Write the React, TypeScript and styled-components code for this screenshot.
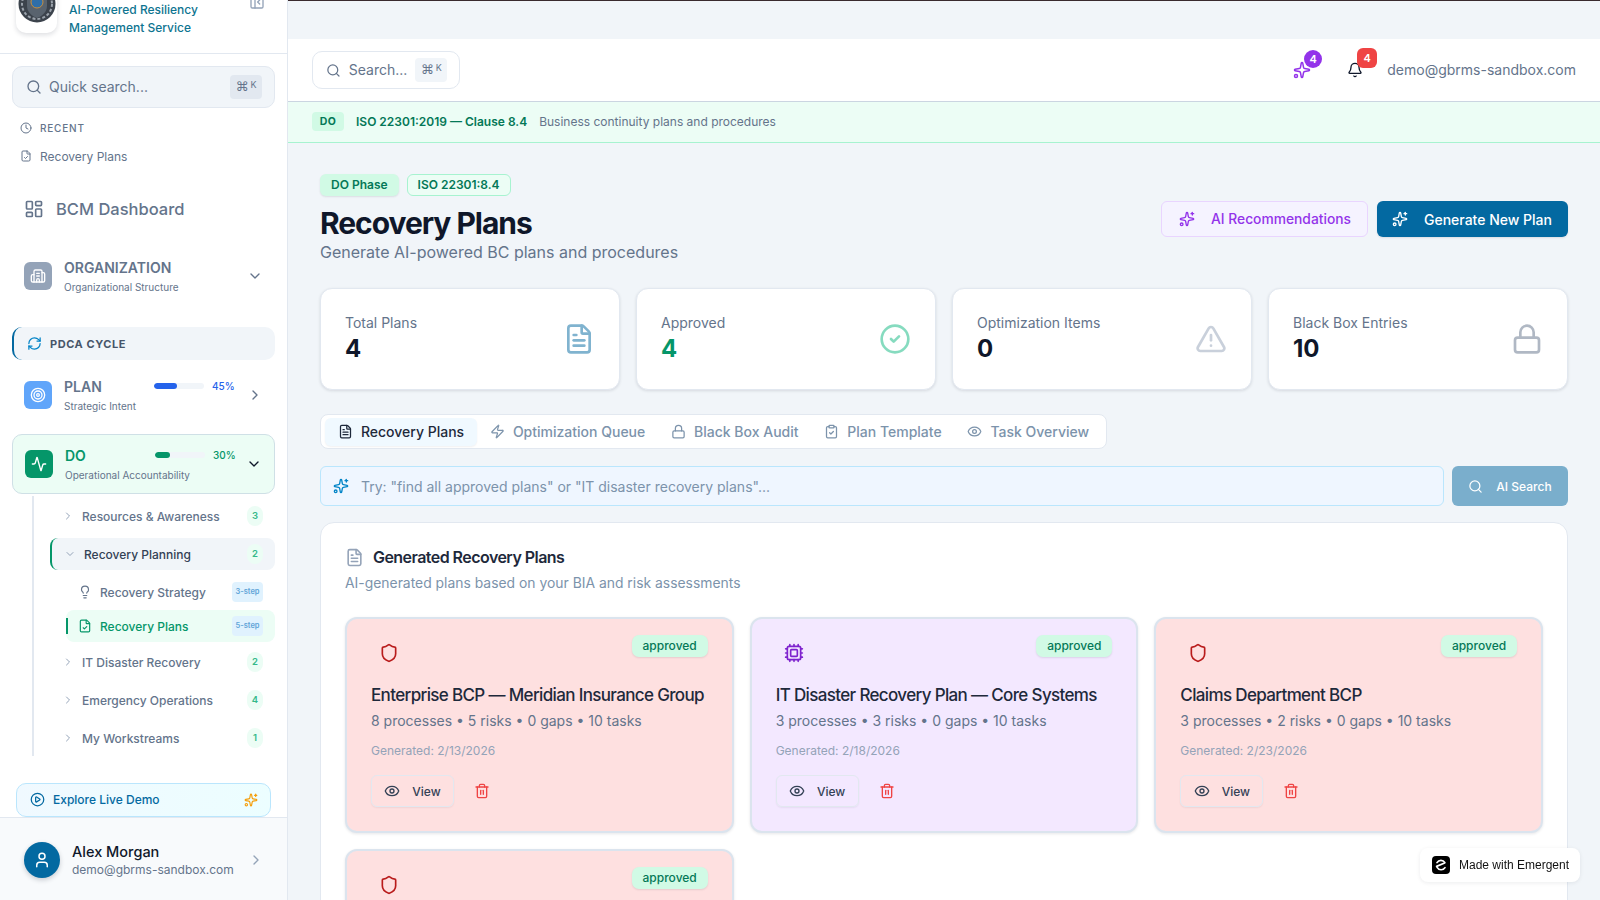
import React from "react";
import styled, { createGlobalStyle } from "styled-components";
import {
  Activity,
  Bell,
  Building2,
  ChevronDown,
  ChevronRight,
  CircleCheck,
  CirclePlay,
  Clock,
  ClipboardCheck,
  Cpu,
  Eye,
  FileCheck,
  FileText,
  LayoutDashboard,
  Lightbulb,
  Lock,
  PanelLeftClose,
  RefreshCw,
  Search,
  Shield,
  Sparkles,
  Target,
  Trash2,
  TriangleAlert,
  User,
  Zap,
} from "lucide-react";

const GlobalStyle = createGlobalStyle`
  * { box-sizing: border-box; }
  html, body { margin: 0; height: 100%; }
  body {
    font-family: Inter, "Liberation Sans", sans-serif;
    color: #0f172a;
    background: #f1f5f9;
  }
`;

const Page = styled.div`
  display: flex;
  height: 900px;
  overflow: hidden;
`;

/* sidebar */
const Side = styled.aside`
  width: 288px;
  flex: none;
  background: #fff;
  border-right: 1px solid #e2e8f0;
  display: flex;
  flex-direction: column;
`;

const Brand = styled.div`
  height: 54px;
  flex: none;
  overflow: hidden;
  border-bottom: 1px solid #e2e8f0;
  display: flex;
  align-items: flex-end;
  padding: 0 22px 16px 16px;
  gap: 12px;
`;

const LogoBox = styled.div`
  width: 41px;
  height: 60px;
  margin-bottom: 4px;
  flex: none;
  background: #fff;
  border-radius: 10px;
  box-shadow: 0 2px 5px rgba(15, 23, 42, 0.14);
  display: flex;
  align-items: flex-end;
  justify-content: center;
  padding-bottom: 10px;
`;

const BrandText = styled.div`
  flex: 1;
  font-size: 12px;
  line-height: 18px;
  font-weight: 500;
  color: #0e7490;
`;

const Collapse = styled.div`
  color: #94a3b8;
  height: 16px;
  margin-bottom: 27px;
  svg { display: block; }
`;

const Nav = styled.nav`
  flex: 1;
  min-height: 0;
  padding: 12px 12px 0;
  display: flex;
  flex-direction: column;
`;

const QuickSearch = styled.div`
  height: 42px;
  flex: none;
  background: #f1f5f9;
  border: 1px solid #e2e8f0;
  border-radius: 10px;
  display: flex;
  align-items: center;
  padding: 0 12px 0 13px;
  gap: 7px;
  color: #64748b;
  font-size: 14px;
  span.label { flex: 1; margin-bottom: 2px; }
`;

const Kbd = styled.kbd<{ $small?: boolean }>`
  display: flex;
  align-items: flex-start;
  justify-content: center;
  gap: 2px;
  width: 32px;
  height: 24px;
  background: ${(p) => (p.$small ? "#f1f5f9" : "#e2e8f0")};
  border-radius: 4px;
  color: #64748b;
  font-family: "DejaVu Sans", sans-serif;
  font-size: 13px;
  line-height: 24px;
  small {
    font-family: Inter, sans-serif;
    font-size: 9px;
    line-height: 20px;
  }
`;

const RecentHead = styled.div`
  margin: 14px 0 0 8px;
  height: 12px;
  display: flex;
  align-items: center;
  gap: 8px;
  font-size: 10px;
  font-weight: 500;
  letter-spacing: 0.08em;
  color: #64748b;
`;

const RecentItem = styled.div`
  margin: 14px 0 0 8px;
  height: 16px;
  display: flex;
  align-items: center;
  gap: 8px;
  font-size: 12px;
  color: #64748b;
`;

const DashLink = styled.div`
  margin: 27px 0 0 12px;
  height: 36px;
  display: flex;
  align-items: center;
  gap: 12px;
  font-size: 16.5px;
  font-weight: 500;
  color: #64748b;
`;

const PhaseRow = styled.div<{ $top: number; $active?: boolean }>`
  margin-top: ${(p) => p.$top}px;
  height: ${(p) => (p.$active ? 60 : 34)}px;
  flex: none;
  display: flex;
  align-items: center;
  padding: 0 12px;
  border-radius: 10px;
  ${(p) => p.$active && "background: #ecfdf5; border: 1px solid #cfe0e6;"}
`;

const PhaseIcon = styled.div<{ $bg: string }>`
  width: 28px;
  height: 28px;
  flex: none;
  background: ${(p) => p.$bg};
  border-radius: 6px;
  color: #fff;
  display: flex;
  align-items: center;
  justify-content: center;
`;

const PhaseText = styled.div`
  margin-left: 12px;
  flex: 1;
  min-width: 0;
`;

const PhaseTop = styled.div`
  display: flex;
  align-items: center;
  height: 18px;
`;

const PhaseName = styled.div<{ $color: string }>`
  width: 90px;
  font-size: 14px;
  line-height: 18px;
  font-weight: 600;
  color: ${(p) => p.$color};
`;

const Bar = styled.div`
  width: 50px;
  height: 6px;
  background: #f1f5f9;
  border-radius: 3px;
  overflow: hidden;
  margin-bottom: 2px;
`;

const BarFill = styled.div<{ $color: string }>`
  height: 100%;
  background: ${(p) => p.$color};
  border-radius: 3px;
`;

const Percent = styled.div<{ $color: string }>`
  margin-left: 8px;
  font-size: 10px;
  font-weight: 500;
  color: ${(p) => p.$color};
  margin-bottom: 2px;
`;

const PhaseSub = styled.div`
  margin-top: 3px;
  font-size: 10px;
  line-height: 14px;
  color: #64748b;
`;

const PhaseArrow = styled.div<{ $color: string }>`
  width: 16px;
  height: 16px;
  flex: none;
  color: ${(p) => p.$color};
`;

const PdcaHead = styled.div`
  margin-top: 34px;
  height: 33px;
  flex: none;
  background: #f1f5f9;
  border-left: 2px solid #0369a1;
  border-radius: 10px;
  display: flex;
  align-items: center;
  gap: 8px;
  padding-left: 13px;
  font-size: 11px;
  font-weight: 700;
  letter-spacing: 0.05em;
  color: #475569;
  svg { color: #0284c7; }
`;

const Tree = styled.div`
  margin: 2px 0 0 20px;
  height: 260px;
  flex: none;
  border-left: 2px solid #e2e8f0;
  padding: 4px 0 0 16px;
  display: flex;
  flex-direction: column;
  gap: 6px;
`;

const TreeRow = styled.div<{ $open?: boolean }>`
  height: 32px;
  flex: none;
  display: flex;
  align-items: center;
  padding: 0 12px;
  font-size: 12px;
  font-weight: 500;
  color: ${(p) => (p.$open ? "#334155" : "#64748b")};
  border-radius: 8px;
  ${(p) => p.$open && "background: #f1f5f9; border-left: 2px solid #059669;"}
  svg { color: #94a3b8; flex: none; }
  span.label { flex: 1; margin-left: 8px; }
`;

const Count = styled.div`
  min-width: 16px;
  height: 20px;
  padding: 0 5px;
  border-radius: 10px;
  background: #ecfdf5;
  font-size: 9.5px;
  font-weight: 600;
  line-height: 20px;
  text-align: center;
  color: #34b98a;
`;

const SubList = styled.div`
  display: flex;
  flex-direction: column;
  gap: 2px;
  margin: 0 0 -2px 16px;
`;

const SubRow = styled.div<{ $active?: boolean }>`
  position: relative;
  height: 32px;
  display: flex;
  align-items: center;
  padding: 0 12px;
  font-size: 12px;
  font-weight: 500;
  border-radius: 8px;
  color: ${(p) => (p.$active ? "#059669" : "#64748b")};
  background: ${(p) => (p.$active ? "#ecfdf5" : "transparent")};
  gap: 8px;
  span.label { flex: 1; }
  ${(p) =>
    p.$active &&
    `&::before {
      content: "";
      position: absolute;
      left: 0;
      top: 8px;
      width: 2px;
      height: 16px;
      background: #059669;
    }`}
`;

const StepTag = styled.div`
  width: 31px;
  height: 20px;
  border-radius: 4px;
  background: #e0f2fe;
  font-size: 7.5px;
  font-weight: 600;
  line-height: 20px;
  text-align: center;
  color: #60a5d8;
`;

const DemoLink = styled.div`
  margin: 0 16px;
  height: 34px;
  flex: none;
  background: linear-gradient(90deg, #f0f9ff, #ecfeff);
  border: 1px solid #bae6fd;
  border-radius: 10px;
  display: flex;
  align-items: center;
  padding: 0 12px 1px 13px;
  gap: 8px;
  font-size: 12px;
  font-weight: 500;
  color: #0369a1;
  span.label { flex: 1; }
`;

const UserBar = styled.div`
  height: 83px;
  flex: none;
  background: #f8fafc;
  border-top: 1px solid #e2e8f0;
  display: flex;
  align-items: center;
  padding: 2px 23px 0 24px;
  gap: 12px;
`;

const Avatar = styled.div`
  width: 36px;
  height: 36px;
  flex: none;
  border-radius: 50%;
  background: #0369a1;
  color: #fff;
  box-shadow: 0 2px 5px rgba(15, 23, 42, 0.2);
  display: flex;
  align-items: center;
  justify-content: center;
`;

const UserText = styled.div`
  flex: 1;
  min-width: 0;
  margin-top: 2px;
  white-space: nowrap;
  b { display: block; font-size: 14.5px; line-height: 18px; font-weight: 500; color: #0f172a; }
  span { display: block; font-size: 12px; line-height: 18px; color: #64748b; }
`;

/* main column */
const Main = styled.main`
  flex: 1;
  min-width: 0;
  display: flex;
  flex-direction: column;
  overflow: hidden;
`;

const TopStrip = styled.div`
  height: 39px;
  flex: none;
  background: #f1f5f9;
  border-top: 1px solid #3a2a2e;
`;

const Header = styled.header`
  height: 63px;
  flex: none;
  background: #fff;
  border-bottom: 1px solid #cbd5e1;
  display: flex;
  align-items: center;
  justify-content: space-between;
  padding: 0 24px;
`;

const HeadSearch = styled.div`
  width: 148px;
  height: 38px;
  border: 1px solid #e2e8f0;
  border-radius: 10px;
  display: flex;
  align-items: center;
  gap: 8px;
  padding: 0 12px 0 13px;
  font-size: 14px;
  color: #64748b;
  span.label { flex: 1; margin-bottom: 2px; }
`;

const HeadRight = styled.div`
  display: flex;
  align-items: center;
`;

const IconSlot = styled.div<{ $color: string; $gap?: number }>`
  position: relative;
  width: 20px;
  height: 20px;
  margin-left: ${(p) => p.$gap ?? 0}px;
  color: ${(p) => p.$color};
  display: flex;
  align-items: center;
  justify-content: center;
`;

const HeadBadge = styled.div<{ $red?: boolean }>`
  position: absolute;
  font-size: 11px;
  font-weight: 600;
  color: #fff;
  text-align: center;
  background: ${(p) => (p.$red ? "#ef4444" : "#9333ea")};
  width: ${(p) => (p.$red ? 20 : 18)}px;
  height: ${(p) => (p.$red ? 20 : 18)}px;
  line-height: ${(p) => (p.$red ? 20 : 18)}px;
  border-radius: ${(p) => (p.$red ? "6px" : "50%")};
  top: ${(p) => (p.$red ? -12 : -10)}px;
  left: 12px;
`;

const HeadMail = styled.div`
  margin: 0 0 2px 22px;
  font-size: 14px;
  color: #64748b;
`;

const Banner = styled.div`
  height: 41px;
  flex: none;
  background: #ecfdf5;
  border-bottom: 1px solid #a7f3d0;
  display: flex;
  align-items: center;
  padding: 0 24px 1px;
  font-size: 12px;
  color: #64748b;
`;

const BannerPill = styled.div`
  width: 32px;
  height: 19px;
  background: #d1fae5;
  border-radius: 4px;
  font-size: 10.5px;
  font-weight: 700;
  line-height: 19px;
  text-align: center;
  letter-spacing: 0.04em;
  color: #047857;
`;

const BannerClause = styled.div`
  margin: 0 12px;
  font-weight: 600;
  font-size: 12px;
  color: #047857;
`;

const Content = styled.div`
  padding: 31px 32px 0;
`;

const TitleRow = styled.div`
  display: flex;
  justify-content: space-between;
  align-items: flex-end;
`;

const Tags = styled.div`
  display: flex;
  gap: 8px;
  height: 22px;
`;

const Tag = styled.div<{ $solid?: boolean }>`
  height: 22px;
  padding: 0 ${(p) => (p.$solid ? 11 : 10)}px;
  border-radius: 6px;
  font-size: 12px;
  font-weight: 600;
  line-height: ${(p) => (p.$solid ? 22 : 20)}px;
  color: #047857;
  ${(p) =>
    p.$solid
      ? "background: #d1fae5; box-shadow: 0 1px 2px rgba(15,23,42,.1);"
      : "background: #ecfdf5; border: 1px solid #a7f3d0;"}
`;

const Title = styled.h1`
  margin: 9px 0 0;
  font-size: 30px;
  line-height: 36px;
  font-weight: 700;
  letter-spacing: -0.035em;
  color: #0f172a;
`;

const Subtitle = styled.p`
  margin: -1px 0 0;
  font-size: 16px;
  line-height: 24px;
  color: #64748b;
`;

const Actions = styled.div`
  display: flex;
  gap: 9px;
  margin-bottom: 27px;
`;

const ActionButton = styled.button<{ $primary?: boolean }>`
  height: 36px;
  display: flex;
  align-items: center;
  gap: 16px;
  padding: 0 16px 0 ${(p) => (p.$primary ? 15 : 17)}px;
  border-radius: 6px;
  font-family: inherit;
  font-size: ${(p) => (p.$primary ? 14 : 13.8)}px;
  font-weight: 500;
  ${(p) =>
    p.$primary
      ? "background: #0369a1; color: #fff; border: none; box-shadow: 0 1px 2px rgba(15,23,42,.1);"
      : "background: #f5f3ff; color: #9333ea; border: 1px solid #e9d5ff;"}
`;

const StatGrid = styled.div`
  margin-top: 24px;
  display: grid;
  grid-template-columns: repeat(4, minmax(0, 1fr));
  gap: 16px;
`;

const StatCard = styled.div`
  height: 102px;
  background: #fff;
  border: 1px solid #e2e8f0;
  border-radius: 12px;
  box-shadow: 0 1px 3px rgba(15, 23, 42, 0.12);
  display: flex;
  align-items: center;
  justify-content: space-between;
  padding: 0 24px;
`;

const StatLabel = styled.div`
  font-size: 14px;
  line-height: 20px;
  color: #64748b;
`;

const StatValue = styled.div<{ $green?: boolean }>`
  font-size: 24px;
  line-height: 32px;
  font-weight: 700;
  color: ${(p) => (p.$green ? "#059669" : "#0f172a")};
`;

const StatIcon = styled.div<{ $color: string }>`
  width: 32px;
  height: 32px;
  color: ${(p) => p.$color};
  opacity: 0.5;
`;

const Tabs = styled.div`
  margin-top: 24px;
  width: fit-content;
  height: 35px;
  background: #fff;
  border: 1px solid #e2e8f0;
  border-radius: 8px;
  display: flex;
  align-items: center;
  padding: 0 4px;
`;

const Tab = styled.div<{ $active?: boolean }>`
  height: 28px;
  display: flex;
  align-items: center;
  gap: 8px;
  padding: 0 12.9px;
  border-radius: 6px;
  font-size: 14px;
  font-weight: 500;
  color: ${(p) => (p.$active ? "#1e293b" : "#7c93ab")};
  ${(p) => p.$active && "background: #f0f9ff; box-shadow: 0 1px 2px rgba(15,23,42,.06);"}
`;

const AskRow = styled.div`
  margin-top: 17px;
  display: flex;
  gap: 8px;
  height: 40px;
`;

const AskField = styled.div`
  flex: 1;
  background: #eff6ff;
  border: 1px solid #bae6fd;
  border-radius: 6px;
  display: flex;
  align-items: center;
  gap: 12px;
  padding: 0 12px;
  font-size: 14px;
  color: #7c93ab;
  svg { color: #0284c7; }
`;

const AskButton = styled.button`
  width: 116px;
  background: #7aaecc;
  border: none;
  border-radius: 6px;
  color: #fff;
  display: flex;
  align-items: center;
  justify-content: center;
  gap: 13px;
  font-family: inherit;
  font-size: 12px;
  font-weight: 500;
`;

const Panel = styled.section`
  margin-top: 16px;
  background: #fff;
  border: 1px solid #e2e8f0;
  border-radius: 14px;
  padding: 22px 24px 24px;
`;

const PanelTitle = styled.h2`
  margin: 0;
  height: 24px;
  display: flex;
  align-items: center;
  gap: 9px;
  font-size: 16px;
  font-weight: 600;
  letter-spacing: -0.034em;
  color: #1e293b;
  svg { color: #94a3b8; }
`;

const PanelDesc = styled.p`
  margin: 4px 0 0;
  font-size: 13.9px;
  line-height: 20px;
  color: #7c93ab;
`;

const PlanGrid = styled.div`
  margin-top: 24px;
  display: grid;
  grid-template-columns: repeat(3, minmax(0, 1fr));
  gap: 16px;
`;

const PlanCard = styled.article<{ $bg: string }>`
  height: 216px;
  background: ${(p) => p.$bg};
  border: 2px solid #dbe4ee;
  border-radius: 12px;
  box-shadow: 0 1px 3px rgba(15, 23, 42, 0.1);
  padding: 16px 24px 25px;
`;

const PlanHead = styled.div`
  display: flex;
  justify-content: space-between;
  height: 36px;
`;

const PlanIcon = styled.div<{ $color: string }>`
  width: 36px;
  height: 36px;
  padding: 8px;
  color: ${(p) => p.$color};
`;

const Approved = styled.div`
  width: 76px;
  height: 22px;
  background: #d1fae5;
  border-radius: 7px;
  box-shadow: 0 1px 2px rgba(15, 23, 42, 0.1);
  font-size: 12px;
  font-weight: 500;
  line-height: 22px;
  text-align: center;
  color: #047857;
`;

const PlanName = styled.h3`
  margin: 10px 0 0;
  font-size: 17px;
  line-height: 28px;
  font-weight: 500;
  letter-spacing: -0.038em;
  white-space: nowrap;
  color: #1e293b;
`;

const PlanStats = styled.div`
  margin-top: 2px;
  font-size: 14px;
  line-height: 20px;
  color: #64748b;
`;

const PlanDate = styled.div`
  margin-top: 12px;
  font-size: 12px;
  line-height: 16px;
  color: #94a3b8;
`;

const PlanActions = styled.div`
  margin-top: 16px;
  display: flex;
  align-items: center;
  gap: 20px;
  svg.trash { color: #ef4444; }
`;

const ViewButton = styled.button`
  width: 83px;
  height: 32px;
  background: transparent;
  border: 1px solid #e2e8f0;
  border-radius: 6px;
  box-shadow: 0 1px 2px rgba(15, 23, 42, 0.06);
  display: flex;
  align-items: center;
  justify-content: center;
  gap: 12px;
  font-family: inherit;
  font-size: 12px;
  font-weight: 500;
  color: #334155;
`;

const MadeWith = styled.div`
  position: fixed;
  right: 20px;
  bottom: 18px;
  width: 160px;
  height: 34px;
  background: #fff;
  border-radius: 8px;
  box-shadow: 0 1px 4px rgba(15, 23, 42, 0.08);
  display: flex;
  align-items: center;
  gap: 9px;
  padding-left: 12px;
  font-family: "Liberation Sans", Arial, sans-serif;
  font-size: 12px;
  color: #111;
`;

const Emblem = () => (
  <svg width="38" height="38" viewBox="0 0 38 38">
    <circle cx="19" cy="19" r="18.5" fill="#3c434c" />
    <circle cx="19" cy="19" r="15" fill="none" stroke="#9aa2ab" strokeWidth="2" strokeDasharray="3 2" />
    <path d="M19 8l10 5v8c0 6-5 10-10 12-5-2-10-6-10-12v-8z" fill="#59636e" />
    <circle cx="19" cy="17" r="6" fill="#2f6ea8" stroke="#c98f3c" strokeWidth="1" />
  </svg>
);

const MadeLogo = () => (
  <svg width="18" height="18" viewBox="0 0 18 18">
    <rect width="18" height="18" rx="4" fill="#000" />
    <path
      d="M4.6 10.4l8-3.4M12.9 6.6A4.6 4.6 0 0 0 5 6.6M5.1 11.4a4.6 4.6 0 0 0 7.9 .2"
      fill="none"
      stroke="#fff"
      strokeWidth="1.7"
      strokeLinecap="round"
    />
  </svg>
);

const plans = [
  { name: "Enterprise BCP — Meridian Insurance Group", stats: "8 processes • 5 risks • 0 gaps • 10 tasks", date: "2/13/2026", bg: "#fee0e0", icon: "#b91c1c", cpu: false },
  { name: "IT Disaster Recovery Plan — Core Systems", stats: "3 processes • 3 risks • 0 gaps • 10 tasks", date: "2/18/2026", bg: "#f3e8ff", icon: "#7e22ce", cpu: true },
  { name: "Claims Department BCP", stats: "3 processes • 2 risks • 0 gaps • 10 tasks", date: "2/23/2026", bg: "#fee0e0", icon: "#b91c1c", cpu: false },
];

const tabs = [
  { label: "Recovery Plans", Icon: FileText },
  { label: "Optimization Queue", Icon: Zap },
  { label: "Black Box Audit", Icon: Lock },
  { label: "Plan Template", Icon: ClipboardCheck },
  { label: "Task Overview", Icon: Eye },
];

function Sidebar() {
  return (
    <Side>
      <Brand>
        <LogoBox>
          <Emblem />
        </LogoBox>
        <BrandText>
          AI-Powered Resiliency
          <br />
          Management Service
        </BrandText>
        <Collapse>
          <PanelLeftClose size={16} />
        </Collapse>
      </Brand>
      <Nav>
        <QuickSearch>
          <Search size={16} />
          <span className="label">Quick search...</span>
          <Kbd>
            ⌘<small>K</small>
          </Kbd>
        </QuickSearch>
        <RecentHead>
          <Clock size={12} />
          RECENT
        </RecentHead>
        <RecentItem>
          <FileCheck size={12} />
          Recovery Plans
        </RecentItem>
        <DashLink>
          <LayoutDashboard size={20} />
          BCM Dashboard
        </DashLink>
        <PhaseRow $top={32}>
          <PhaseIcon $bg="#94a3b8">
            <Building2 size={16} />
          </PhaseIcon>
          <PhaseText>
            <PhaseTop>
              <PhaseName $color="#64748b">ORGANIZATION</PhaseName>
            </PhaseTop>
            <PhaseSub>Organizational Structure</PhaseSub>
          </PhaseText>
          <PhaseArrow $color="#64748b">
            <ChevronDown size={16} />
          </PhaseArrow>
        </PhaseRow>
        <PdcaHead>
          <RefreshCw size={15} />
          PDCA CYCLE
        </PdcaHead>
        <PhaseRow $top={18}>
          <PhaseIcon $bg="#60a5fa">
            <Target size={16} />
          </PhaseIcon>
          <PhaseText>
            <PhaseTop>
              <PhaseName $color="#64748b">PLAN</PhaseName>
              <Bar>
                <BarFill $color="#2563eb" style={{ width: "45%" }} />
              </Bar>
              <Percent $color="#2563eb">45%</Percent>
            </PhaseTop>
            <PhaseSub>Strategic Intent</PhaseSub>
          </PhaseText>
          <PhaseArrow $color="#64748b">
            <ChevronRight size={16} />
          </PhaseArrow>
        </PhaseRow>
        <PhaseRow $top={22} $active>
          <PhaseIcon $bg="#059669">
            <Activity size={16} />
          </PhaseIcon>
          <PhaseText>
            <PhaseTop>
              <PhaseName $color="#059669">DO</PhaseName>
              <Bar>
                <BarFill $color="#059669" style={{ width: "30%" }} />
              </Bar>
              <Percent $color="#059669">30%</Percent>
            </PhaseTop>
            <PhaseSub>Operational Accountability</PhaseSub>
          </PhaseText>
          <PhaseArrow $color="#0f172a">
            <ChevronDown size={16} />
          </PhaseArrow>
        </PhaseRow>
        <Tree>
          <TreeRow>
            <ChevronRight size={12} />
            <span className="label">Resources &amp; Awareness</span>
            <Count>3</Count>
          </TreeRow>
          <TreeRow $open>
            <ChevronDown size={12} />
            <span className="label">Recovery Planning</span>
            <Count>2</Count>
          </TreeRow>
          <SubList>
            <SubRow>
              <Lightbulb size={14} />
              <span className="label">Recovery Strategy</span>
              <StepTag>3-step</StepTag>
            </SubRow>
            <SubRow $active>
              <FileCheck size={14} />
              <span className="label">Recovery Plans</span>
              <StepTag>5-step</StepTag>
            </SubRow>
          </SubList>
          <TreeRow>
            <ChevronRight size={12} />
            <span className="label">IT Disaster Recovery</span>
            <Count>2</Count>
          </TreeRow>
          <TreeRow>
            <ChevronRight size={12} />
            <span className="label">Emergency Operations</span>
            <Count>4</Count>
          </TreeRow>
          <TreeRow>
            <ChevronRight size={12} />
            <span className="label">My Workstreams</span>
            <Count>1</Count>
          </TreeRow>
        </Tree>
      </Nav>
      <DemoLink>
        <CirclePlay size={15} />
        <span className="label">Explore Live Demo</span>
        <Sparkles size={14} color="#f59e0b" />
      </DemoLink>
      <UserBar>
        <Avatar>
          <User size={18} />
        </Avatar>
        <UserText>
          <b>Alex Morgan</b>
          <span>demo@gbrms-sandbox.com</span>
        </UserText>
        <ChevronRight size={16} color="#94a3b8" />
      </UserBar>
    </Side>
  );
}

function App() {
  return (
    <Page>
      <GlobalStyle />
      <Sidebar />
      <Main>
        <TopStrip />
        <Header>
          <HeadSearch>
            <Search size={15} />
            <span className="label">Search...</span>
            <Kbd $small>
              ⌘<small>K</small>
            </Kbd>
          </HeadSearch>
          <HeadRight>
            <IconSlot $color="#9333ea">
              <Sparkles size={18} />
              <HeadBadge>4</HeadBadge>
            </IconSlot>
            <IconSlot $color="#0f172a" $gap={33}>
              <Bell size={16} />
              <HeadBadge $red>4</HeadBadge>
            </IconSlot>
            <HeadMail>demo@gbrms-sandbox.com</HeadMail>
          </HeadRight>
        </Header>
        <Banner>
          <BannerPill>DO</BannerPill>
          <BannerClause>ISO 22301:2019 — Clause 8.4</BannerClause>
          Business continuity plans and procedures
        </Banner>
        <Content>
          <TitleRow>
            <div>
              <Tags>
                <Tag $solid>DO Phase</Tag>
                <Tag>ISO 22301:8.4</Tag>
              </Tags>
              <Title>Recovery Plans</Title>
              <Subtitle>Generate AI-powered BC plans and procedures</Subtitle>
            </div>
            <Actions>
              <ActionButton>
                <Sparkles size={16} />
                AI Recommendations
              </ActionButton>
              <ActionButton $primary>
                <Sparkles size={16} />
                Generate New Plan
              </ActionButton>
            </Actions>
          </TitleRow>
          <StatGrid>
            <StatCard>
              <div>
                <StatLabel>Total Plans</StatLabel>
                <StatValue>4</StatValue>
              </div>
              <StatIcon $color="#0369a1">
                <FileText size={32} />
              </StatIcon>
            </StatCard>
            <StatCard>
              <div>
                <StatLabel>Approved</StatLabel>
                <StatValue $green>4</StatValue>
              </div>
              <StatIcon $color="#10b981">
                <CircleCheck size={32} />
              </StatIcon>
            </StatCard>
            <StatCard>
              <div>
                <StatLabel>Optimization Items</StatLabel>
                <StatValue>0</StatValue>
              </div>
              <StatIcon $color="#94a3b8">
                <TriangleAlert size={32} />
              </StatIcon>
            </StatCard>
            <StatCard>
              <div>
                <StatLabel>Black Box Entries</StatLabel>
                <StatValue>10</StatValue>
              </div>
              <StatIcon $color="#64748b">
                <Lock size={32} />
              </StatIcon>
            </StatCard>
          </StatGrid>
          <Tabs>
            {tabs.map(({ label, Icon }, i) => (
              <Tab key={label} $active={i === 0}>
                <Icon size={15} />
                {label}
              </Tab>
            ))}
          </Tabs>
          <AskRow>
            <AskField>
              <Sparkles size={16} />
              Try: "find all approved plans" or "IT disaster recovery plans"...
            </AskField>
            <AskButton>
              <Search size={15} />
              AI Search
            </AskButton>
          </AskRow>
          <Panel>
            <PanelTitle>
              <FileText size={19} />
              Generated Recovery Plans
            </PanelTitle>
            <PanelDesc>AI-generated plans based on your BIA and risk assessments</PanelDesc>
            <PlanGrid>
              {plans.map((plan) => (
                <PlanCard key={plan.date} $bg={plan.bg}>
                  <PlanHead>
                    <PlanIcon $color={plan.icon}>
                      {plan.cpu ? <Cpu size={20} /> : <Shield size={20} />}
                    </PlanIcon>
                    <Approved>approved</Approved>
                  </PlanHead>
                  <PlanName>{plan.name}</PlanName>
                  <PlanStats>{plan.stats}</PlanStats>
                  <PlanDate>Generated: {plan.date}</PlanDate>
                  <PlanActions>
                    <ViewButton>
                      <Eye size={16} />
                      View
                    </ViewButton>
                    <Trash2 className="trash" size={16} />
                  </PlanActions>
                </PlanCard>
              ))}
              <PlanCard $bg="#fee0e0">
                <PlanHead>
                  <PlanIcon $color="#b91c1c">
                    <Shield size={20} />
                  </PlanIcon>
                  <Approved>approved</Approved>
                </PlanHead>
              </PlanCard>
            </PlanGrid>
          </Panel>
        </Content>
      </Main>
      <MadeWith>
        <MadeLogo />
        Made with Emergent
      </MadeWith>
    </Page>
  );
}

export default App;
